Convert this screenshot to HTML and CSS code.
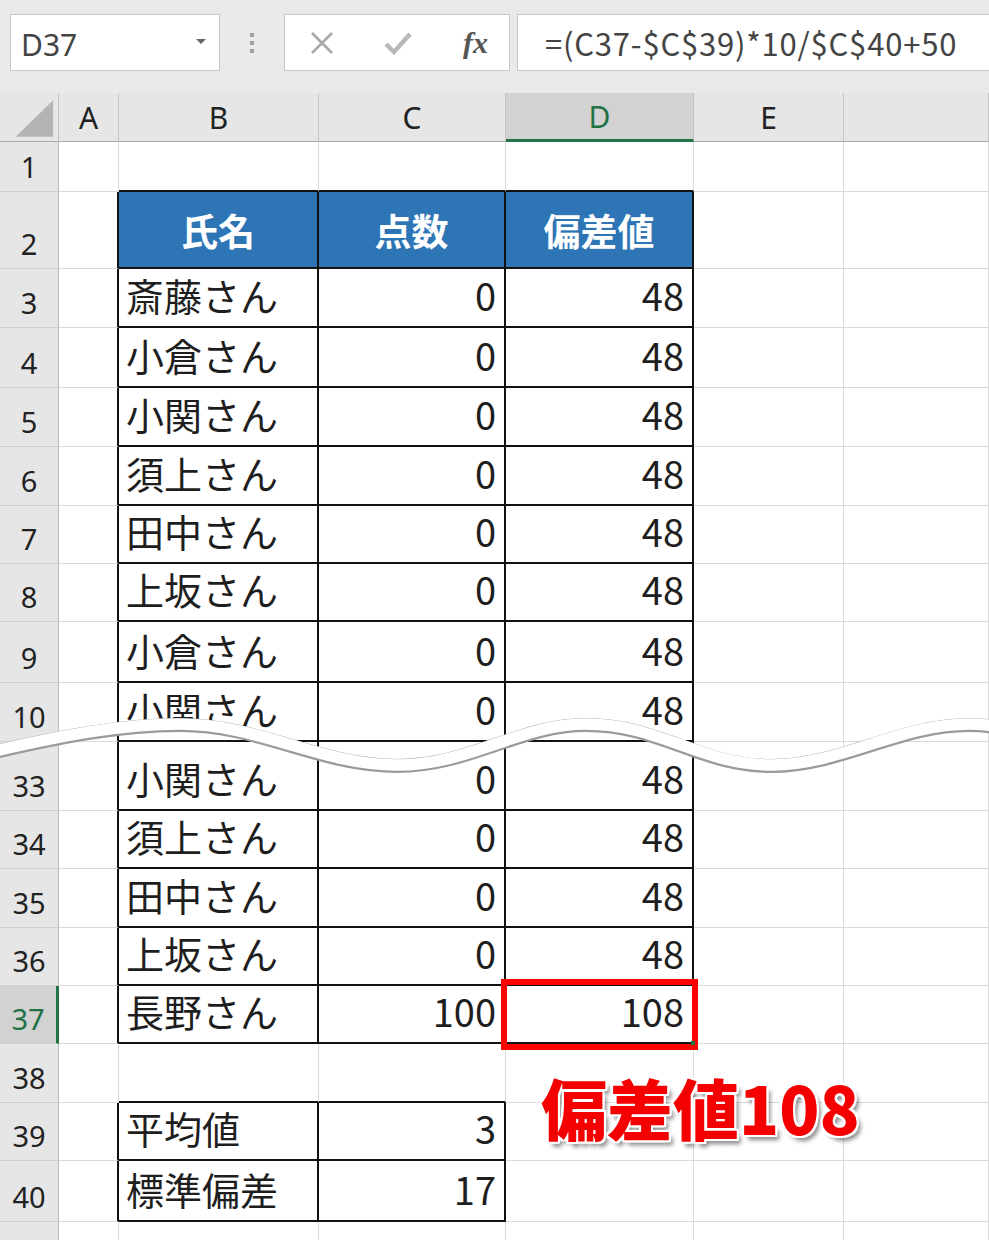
FILE: index.html
```html
<!DOCTYPE html>
<html lang="ja">
<head>
    <meta charset="UTF-8">
    <title>偏差値</title>
    <link rel="stylesheet" href="styles.css">
</head>
<body>

    <div class="toolbar">
        <div class="name-box">
            <span>D37</span>
            <span class="drop"></span>
        </div>
        <div class="grip">
            <span></span><span></span><span></span>
        </div>
        <div class="fx-buttons">
            <svg class="ico" width="26" height="26" viewBox="0 0 26 26">
                <path d="M3 3 L23 23 M23 3 L3 23" stroke="#a9a9a9" stroke-width="2.6" fill="none"/>
            </svg>
            <svg class="ico" width="30" height="26" viewBox="0 0 30 26">
                <path d="M3 14 L11 22 L27 4" stroke="#b9b9b9" stroke-width="4.5" fill="none"/>
            </svg>
            <span class="fx">fx</span>
        </div>
        <div class="formula">=(C37-$C$39)*10/$C$40+50</div>
    </div>

    <div class="sheet">
        <!-- column headers -->
        <div class="row">
            <div class="ch corner">
                <svg width="59" height="48" viewBox="0 0 59 48">
                    <polygon points="54,7 54,44 16,44" fill="#b4b4b4"/>
                </svg>
            </div>
            <div class="ch">A</div>
            <div class="ch">B</div>
            <div class="ch">C</div>
            <div class="ch sel">D</div>
            <div class="ch">E</div>
            <div class="ch"></div>
        </div>

        <div class="row">
            <div class="rh">1</div>
            <div class="c"></div>
            <div class="c tt"></div>
            <div class="c tt"></div>
            <div class="c tt"></div>
            <div class="c"></div>
            <div class="c"></div>
        </div>

        <div class="row">
            <div class="rh">2</div>
            <div class="c tl"></div>
            <div class="c t th">氏名</div>
            <div class="c t th">点数</div>
            <div class="c t th">偏差値</div>
            <div class="c"></div>
            <div class="c"></div>
        </div>

        <div class="row">
            <div class="rh">3</div>
            <div class="c tl"></div>
            <div class="c t">斎藤さん</div>
            <div class="c t num">0</div>
            <div class="c t num">48</div>
            <div class="c"></div>
            <div class="c"></div>
        </div>

        <div class="row">
            <div class="rh">4</div>
            <div class="c tl"></div>
            <div class="c t">小倉さん</div>
            <div class="c t num">0</div>
            <div class="c t num">48</div>
            <div class="c"></div>
            <div class="c"></div>
        </div>

        <div class="row">
            <div class="rh">5</div>
            <div class="c tl"></div>
            <div class="c t">小関さん</div>
            <div class="c t num">0</div>
            <div class="c t num">48</div>
            <div class="c"></div>
            <div class="c"></div>
        </div>

        <div class="row">
            <div class="rh">6</div>
            <div class="c tl"></div>
            <div class="c t">須上さん</div>
            <div class="c t num">0</div>
            <div class="c t num">48</div>
            <div class="c"></div>
            <div class="c"></div>
        </div>

        <div class="row">
            <div class="rh">7</div>
            <div class="c tl"></div>
            <div class="c t">田中さん</div>
            <div class="c t num">0</div>
            <div class="c t num">48</div>
            <div class="c"></div>
            <div class="c"></div>
        </div>

        <div class="row">
            <div class="rh">8</div>
            <div class="c tl"></div>
            <div class="c t">上坂さん</div>
            <div class="c t num">0</div>
            <div class="c t num">48</div>
            <div class="c"></div>
            <div class="c"></div>
        </div>

        <div class="row">
            <div class="rh">9</div>
            <div class="c tl"></div>
            <div class="c t">小倉さん</div>
            <div class="c t num">0</div>
            <div class="c t num">48</div>
            <div class="c"></div>
            <div class="c"></div>
        </div>

        <div class="row">
            <div class="rh">10</div>
            <div class="c tl"></div>
            <div class="c t">小関さん</div>
            <div class="c t num">0</div>
            <div class="c t num">48</div>
            <div class="c"></div>
            <div class="c"></div>
        </div>

        <div class="row">
            <div class="rh">33</div>
            <div class="c tl"></div>
            <div class="c t">小関さん</div>
            <div class="c t num">0</div>
            <div class="c t num">48</div>
            <div class="c"></div>
            <div class="c"></div>
        </div>

        <div class="row">
            <div class="rh">34</div>
            <div class="c tl"></div>
            <div class="c t">須上さん</div>
            <div class="c t num">0</div>
            <div class="c t num">48</div>
            <div class="c"></div>
            <div class="c"></div>
        </div>

        <div class="row">
            <div class="rh">35</div>
            <div class="c tl"></div>
            <div class="c t">田中さん</div>
            <div class="c t num">0</div>
            <div class="c t num">48</div>
            <div class="c"></div>
            <div class="c"></div>
        </div>

        <div class="row">
            <div class="rh">36</div>
            <div class="c tl"></div>
            <div class="c t">上坂さん</div>
            <div class="c t num">0</div>
            <div class="c t num">48</div>
            <div class="c"></div>
            <div class="c"></div>
        </div>

        <div class="row">
            <div class="rh sel">37</div>
            <div class="c tl"></div>
            <div class="c t">長野さん</div>
            <div class="c t num">100</div>
            <div class="c t num active">108<span class="mark"></span><span class="handle"></span></div>
            <div class="c"></div>
            <div class="c"></div>
        </div>

        <div class="row">
            <div class="rh">38</div>
            <div class="c"></div>
            <div class="c tt"></div>
            <div class="c tt"></div>
            <div class="c"></div>
            <div class="c"></div>
            <div class="c"></div>
        </div>

        <div class="row">
            <div class="rh">39</div>
            <div class="c tl"></div>
            <div class="c t">平均値</div>
            <div class="c t num">3</div>
            <div class="c"></div>
            <div class="c"></div>
            <div class="c"></div>
        </div>

        <div class="row">
            <div class="rh">40</div>
            <div class="c tl"></div>
            <div class="c t">標準偏差</div>
            <div class="c t num">17</div>
            <div class="c"></div>
            <div class="c"></div>
            <div class="c"></div>
        </div>

        <div class="row">
            <div class="rh">41</div>
            <div class="c"></div>
            <div class="c"></div>
            <div class="c"></div>
            <div class="c"></div>
            <div class="c"></div>
            <div class="c"></div>
        </div>

        <!-- rows 11-32 are cut out -->
        <svg class="tear" width="989" height="80" viewBox="0 0 989 80">
            <path d="M-5 47 C60 32, 120 20, 180 20 C260 20, 320 61, 397 61 C470 61, 520 20, 586 20 C660 20, 700 61, 772 61 C840 61, 900 20, 969 20 C980 20, 990 21, 1000 23"
                  stroke="#9a9a9a" stroke-width="14" fill="none"/>
            <path d="M-5 46 C60 31, 120 19, 180 19 C260 19, 320 60, 397 60 C470 60, 520 19, 586 19 C660 19, 700 60, 772 60 C840 60, 900 19, 969 19 C980 19, 990 20, 1000 22"
                  stroke="#fff" stroke-width="11.5" fill="none"/>
        </svg>

        <div class="note">偏差値108</div>
    </div>

</body>
</html>
```

FILE: styles.css
```css
body {
    margin: 0;
    background-color: #fff;
    font-family: "Noto Sans CJK JP", "Noto Sans", sans-serif;
    color: #1e1e1e;
    overflow: hidden;
}

/* formula bar */
.toolbar {
    height: 93px;
    background-color: #e9e9e9;
    display: flex;
    align-items: flex-start;
    padding: 14px 0 0 10px;
    box-sizing: border-box;
}

.name-box {
    width: 210px;
    height: 57px;
    background-color: #fff;
    border: 1px solid #c8c8c8;
    box-sizing: border-box;
    display: flex;
    align-items: center;
    justify-content: space-between;
    padding: 4px 13px 0 10px;
    font-family: "Noto Sans", sans-serif;
    font-size: 30px;
    color: #444;
}

.drop {
    width: 0;
    height: 0;
    border-left: 5px solid transparent;
    border-right: 5px solid transparent;
    border-top: 5px solid #666;
    margin-bottom: 6px;
}

.grip {
    width: 64px;
    height: 57px;
    display: flex;
    flex-direction: column;
    align-items: center;
    justify-content: center;
    gap: 4px;
}

.grip span {
    width: 4px;
    height: 4px;
    background-color: #a0a0a0;
}

.fx-buttons {
    width: 226px;
    height: 57px;
    background-color: #fff;
    border: 1px solid #c8c8c8;
    box-sizing: border-box;
    display: flex;
    align-items: center;
    padding-left: 24px;
    gap: 48px;
}

.fx {
    font-family: "Liberation Serif", serif;
    font-style: italic;
    font-weight: bold;
    font-size: 30px;
    color: #555;
    margin-left: 2px;
}

.formula {
    flex: 1;
    height: 57px;
    margin-left: 7px;
    background-color: #fff;
    border: 1px solid #c8c8c8;
    border-right: none;
    box-sizing: border-box;
    padding: 2px 0 0 27px;
    line-height: 52px;
    font-size: 31px;
    letter-spacing: 0.8px;
    color: #444;
    white-space: nowrap;
}

/* grid */
.sheet {
    position: relative;
    display: grid;
    grid-template-columns: 59px 60px 200px 187px 188px 150px 1fr;
    grid-template-rows: 49px 50px 77px 59px 60px 59px 59px 58px 58px 61px 59px 69px 58px 59px 58px 58px 59px 58px 61px 59px;
}

.row {
    display: contents;
}

.ch {
    background-color: #e6e6e6;
    border-right: 1px solid #c4c4c4;
    border-bottom: 1px solid #ababab;
    display: flex;
    align-items: center;
    justify-content: center;
    font-family: "Noto Sans", sans-serif;
    font-size: 30px;
    color: #222;
}

.ch.corner {
    align-items: flex-start;
}

.ch.sel {
    background-color: #d2d2d2;
    color: #217346;
    border-bottom: 3px solid #217346;
}

.rh {
    background-color: #e6e6e6;
    border-right: 1px solid #b9b9b9;
    border-bottom: 1px solid #d0d0d0;
    display: flex;
    align-items: flex-end;
    justify-content: center;
    padding-bottom: 6px;
    line-height: 36px;
    font-family: "Noto Sans", sans-serif;
    font-size: 29px;
    color: #222;
    box-sizing: border-box;
}

.rh.sel {
    background-color: #d2d2d2;
    color: #217346;
    border-right: 3px solid #217346;
}

.c {
    border-right: 1px solid #dadada;
    border-bottom: 1px solid #dadada;
    display: flex;
    align-items: flex-end;
    padding: 0 7px 8px;
    line-height: 46px;
    font-size: 38px;
    white-space: nowrap;
    box-sizing: border-box;
}

.c.num {
    justify-content: flex-end;
    padding-right: 8px;
}

/* table borders */
.c.t {
    border-right: 2px solid #111;
    border-bottom: 2px solid #111;
}

.c.tl {
    border-right: 2px solid #111;
}

.c.tt {
    border-bottom: 2px solid #111;
}

.c.th {
    background-color: #2e75b6;
    color: #fff;
    font-weight: bold;
    font-size: 37px;
    justify-content: center;
    align-items: center;
    padding: 0;
}

.c.active {
    position: relative;
}

.mark {
    position: absolute;
    left: -5px;
    right: -6px;
    top: -7px;
    bottom: -8px;
    border: 6px solid #ff0000;
}

.handle {
    position: absolute;
    right: -3px;
    bottom: -3px;
    width: 4px;
    height: 4px;
    background-color: #217346;
}

.tear {
    position: absolute;
    left: 0;
    top: 612px;
}

.note {
    position: absolute;
    left: 541px;
    top: 980px;
    font-size: 66px;
    font-weight: 900;
    line-height: 1;
    color: #f50000;
    letter-spacing: 0;
    text-shadow:
        2px 0 0 #fff, -2px 0 0 #fff, 0 2px 0 #fff, 0 -2px 0 #fff,
        2px 2px 0 #fff, -2px -2px 0 #fff, 2px -2px 0 #fff, -2px 2px 0 #fff,
        4px 5px 4px rgba(0, 0, 0, 0.45);
}
```
